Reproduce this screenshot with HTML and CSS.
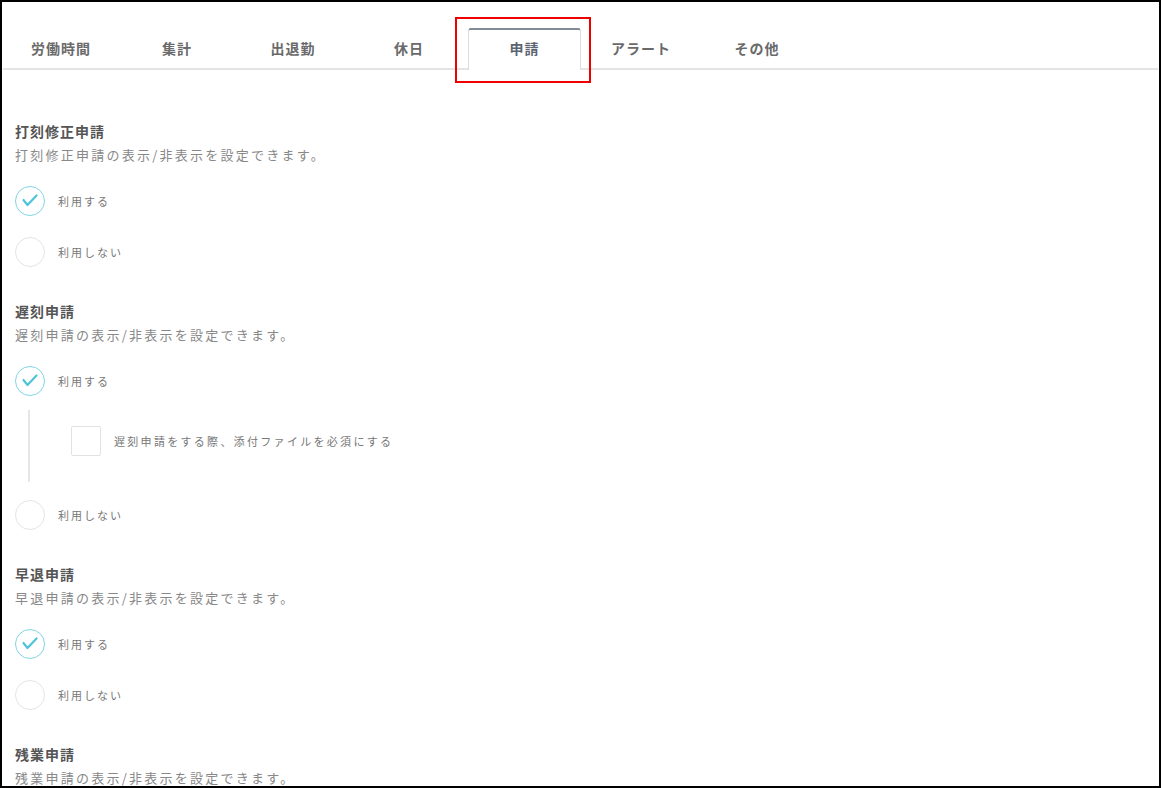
FILE: index.html
```html
<!DOCTYPE html>
<html lang="ja">
<head>
    <meta charset="UTF-8">
    <meta name="viewport" content="width=device-width, initial-scale=1.0">
    <title>設定 - 申請</title>
    <link rel="stylesheet" href="styles.css">
</head>
<body>
    <div class="frame">
        <ul class="tabs">
            <li class="tab"><a>労働時間</a></li>
            <li class="tab"><a>集計</a></li>
            <li class="tab"><a>出退勤</a></li>
            <li class="tab"><a>休日</a></li>
            <li class="tab active"><a>申請</a></li>
            <li class="tab"><a>アラート</a></li>
            <li class="tab"><a>その他</a></li>
        </ul>
        <div class="highlight"></div>

        <div class="settings">
            <div class="setting">
                <h3 class="setting-title">打刻修正申請</h3>
                <p class="setting-desc">打刻修正申請の表示/非表示を設定できます。</p>
                <div class="options">
                    <label class="radio checked">
                        <span class="radio-mark"><svg viewBox="0 0 30 30"><path d="M8.5 14 L12.5 19 L21.5 9.5"/></svg></span>
                        <span class="radio-label">利用する</span>
                    </label>
                    <label class="radio">
                        <span class="radio-mark"></span>
                        <span class="radio-label">利用しない</span>
                    </label>
                </div>
            </div>

            <div class="setting">
                <h3 class="setting-title">遅刻申請</h3>
                <p class="setting-desc">遅刻申請の表示/非表示を設定できます。</p>
                <div class="options">
                    <label class="radio checked">
                        <span class="radio-mark"><svg viewBox="0 0 30 30"><path d="M8.5 14 L12.5 19 L21.5 9.5"/></svg></span>
                        <span class="radio-label">利用する</span>
                    </label>
                    <div class="sub-options">
                        <label class="checkbox">
                            <span class="checkbox-mark"></span>
                            <span class="radio-label wide">遅刻申請をする際、添付ファイルを必須にする</span>
                        </label>
                    </div>
                    <label class="radio">
                        <span class="radio-mark"></span>
                        <span class="radio-label">利用しない</span>
                    </label>
                </div>
            </div>

            <div class="setting">
                <h3 class="setting-title">早退申請</h3>
                <p class="setting-desc">早退申請の表示/非表示を設定できます。</p>
                <div class="options">
                    <label class="radio checked">
                        <span class="radio-mark"><svg viewBox="0 0 30 30"><path d="M8.5 14 L12.5 19 L21.5 9.5"/></svg></span>
                        <span class="radio-label">利用する</span>
                    </label>
                    <label class="radio">
                        <span class="radio-mark"></span>
                        <span class="radio-label">利用しない</span>
                    </label>
                </div>
            </div>

            <div class="setting">
                <h3 class="setting-title">残業申請</h3>
                <p class="setting-desc">残業申請の表示/非表示を設定できます。</p>
                <div class="options">
                    <label class="radio checked">
                        <span class="radio-mark"><svg viewBox="0 0 30 30"><path d="M8.5 14 L12.5 19 L21.5 9.5"/></svg></span>
                        <span class="radio-label">利用する</span>
                    </label>
                </div>
            </div>
        </div>
    </div>
</body>
</html>
```

FILE: styles.css
```css
body {
    margin: 0;
    padding: 0;
    background-color: #ffffff;
    font-family: "Noto Sans CJK JP", "Noto Sans", sans-serif;
}
.frame {
    position: relative;
    width: 1161px;
    height: 788px;
    box-sizing: border-box;
    border: 2px solid #000000;
    overflow: hidden;
    background-color: #ffffff;
}
.tabs {
    display: flex;
    list-style: none;
    margin: 0 1px;
    padding: 26px 0 0 0;
    border-bottom: 2px solid #e4e4e4;
}
.tab {
    width: 116px;
    height: 40px;
}
.tab a {
    display: flex;
    justify-content: center;
    align-items: center;
    height: 40px;
    font-size: 14px;
    font-weight: bold;
    letter-spacing: 1px;
    color: #6a6a6a;
}
.tab.active a {
    height: 36px;
    padding-bottom: 4px;
    margin: 0 2px -2px 1px;
    border: 1px solid #dcdcdc;
    border-top: 2px solid #808a99;
    border-bottom: none;
    border-radius: 3px 3px 0 0;
    background-color: #ffffff;
    color: #5c6472;
    position: relative;
}
.highlight {
    position: absolute;
    left: 453px;
    top: 15px;
    width: 132px;
    height: 62px;
    border: 2px solid #ee0000;
}
.settings {
    padding: 51px 13px 0 13px;
}
.setting {
    margin-bottom: 34px;
}
.setting-title {
    margin: 0;
    font-size: 14px;
    line-height: 20px;
    font-weight: bold;
    letter-spacing: 1px;
    color: #555555;
}
.setting-desc {
    margin: 4px 0 0 0;
    font-size: 13px;
    line-height: 20px;
    letter-spacing: 2.25px;
    color: #888888;
}
.options {
    display: flex;
    flex-direction: column;
    gap: 21px;
    margin-top: 21px;
}
.radio, .checkbox {
    display: flex;
    align-items: center;
    gap: 13px;
}
.radio-mark {
    width: 30px;
    height: 30px;
    box-sizing: border-box;
    border: 1.5px solid #e4e4e4;
    border-radius: 50%;
    display: flex;
    align-items: center;
    justify-content: center;
}
.radio-mark svg {
    width: 30px;
    height: 30px;
    flex: none;
    fill: none;
    stroke: #4fc4d9;
    stroke-width: 2.2;
    stroke-linecap: round;
    stroke-linejoin: round;
}
.radio.checked .radio-mark {
    border-color: #7fd5e5;
}
.radio-label {
    font-size: 11px;
    letter-spacing: 2px;
    color: #777777;
}
.radio-label.wide {
    letter-spacing: 2.3px;
}
.sub-options {
    margin: -7px 0 -3px 13px;
    padding: 16px 0 26px 41px;
    border-left: 2px solid #e6e6e6;
}
.checkbox-mark {
    width: 30px;
    height: 30px;
    box-sizing: border-box;
    border: 1.5px solid #e2e2e2;
    border-radius: 2px;
}
```
